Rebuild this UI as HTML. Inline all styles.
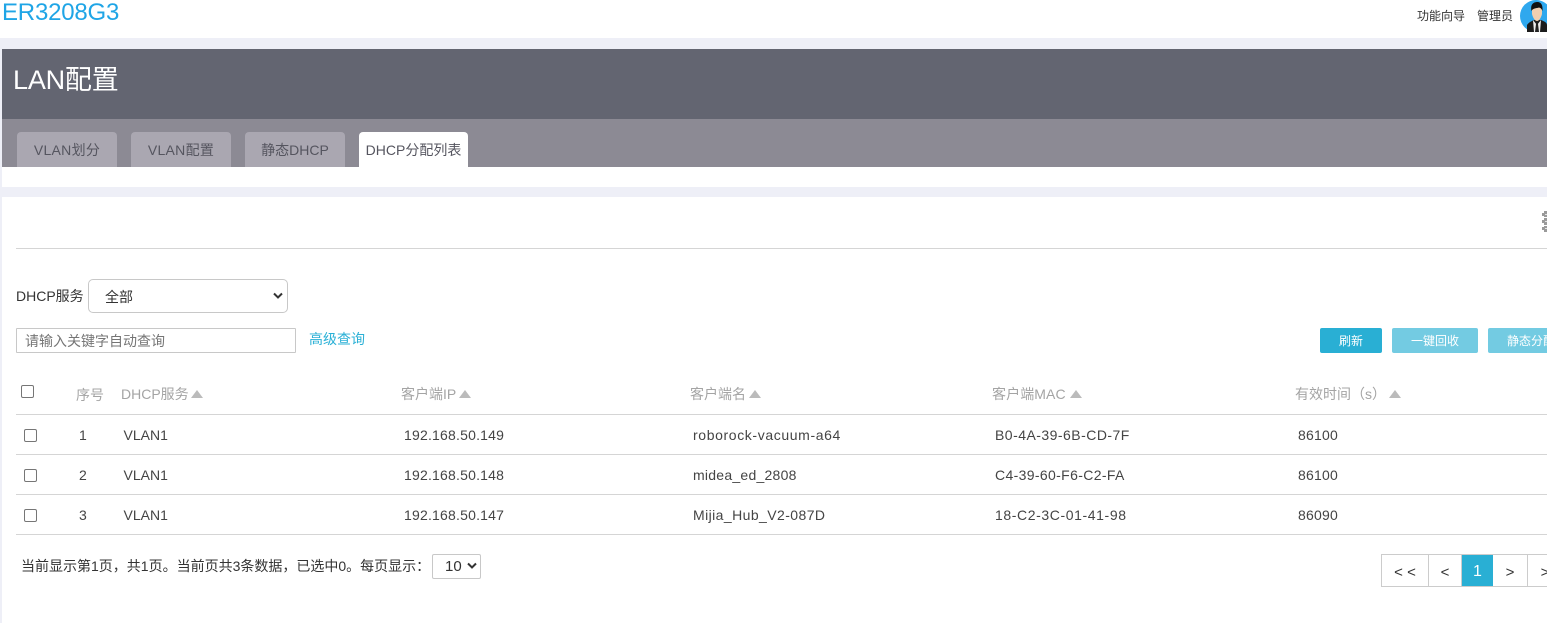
<!DOCTYPE html>
<html lang="zh"><head><meta charset="utf-8"><title>LAN配置</title>
<style>
html,body{margin:0;padding:0}
body{width:1547px;height:623px;overflow:hidden;position:relative;background:#fff;font-family:"Liberation Sans","Noto Sans CJK SC",sans-serif;font-size:13px;color:#333}
.a{position:absolute;white-space:nowrap}
.tab{position:absolute;top:132px;height:35px;background:#aaa7b1;border-radius:4px 4px 0 0;color:#55555f;font-size:14px;line-height:36px;text-align:center}
.th{position:absolute;top:385px;color:#a4a4a4;font-size:14px;line-height:18px;white-space:nowrap}
.tri{position:absolute;width:0;height:0;border-left:6px solid transparent;border-right:6px solid transparent;border-bottom:8px solid #bbb}
.td{position:absolute;font-size:14px;line-height:20px;white-space:nowrap;color:#444}
.hr{position:absolute;left:16px;width:1531px;height:1px;background:#d5d5d5}
.cb{position:absolute;width:11px;height:11px;border:1px solid #767676;border-radius:2px;background:#fff}
.btn{position:absolute;top:328px;height:25px;border-radius:2px;color:#fff;font-size:12px;line-height:26px;text-align:center;white-space:nowrap;overflow:hidden}
.pg{position:absolute;top:554px;height:31px;border:1px solid #ccc;border-left:0;color:#333;font-size:15px;line-height:35px;text-align:center;background:#fff;box-sizing:content-box;white-space:nowrap}
.sel{position:absolute;background:#fff;border:1px solid #c8c8c8;box-sizing:border-box}
</style></head><body>

<div class="a" style="left:2px;top:-3px;font-size:24px;letter-spacing:-0.2px;line-height:32px;color:#1fa5e6">ER3208G3</div>
<div class="a" style="left:1417px;top:8px;font-size:12px;line-height:16px;color:#333">功能向导</div>
<div class="a" style="left:1477px;top:8px;font-size:12px;line-height:16px;color:#333">管理员</div>
<svg class="a" style="left:1520px;top:0" width="27" height="32" viewBox="0 0 27 32">
<circle cx="16" cy="16" r="16" fill="#2fa8ee"/>
<path d="M7 32L7 25C9 22 12 21 14 20L21 20C23 21 27 22 27 25L27 32Z" fill="#1c1c1c"/>
<path d="M13 20L17 25L21 20L20 32L14 32Z" fill="#eee"/>
<path d="M16 24L18 24L19 32L15 32Z" fill="#222"/>
<path d="M12 9C12 6 14 5 17 5C20 5 22 6 22 9L22 14C21 18 19 21 17 21C15 21 13 18 12 14Z" fill="#f1cfb0"/>
<path d="M11.5 11C10 4 14 2 17.500 2C21 2 23 5 22.500 11C21.500 9 21 8 19 7.500C16 8.500 13 8 11.500 11Z" fill="#111"/>
</svg>

<div class="a" style="left:0;top:38px;width:1547px;height:11px;background:#eeeff7"></div>
<div class="a" style="left:0;top:49px;width:2px;height:138px;background:#eeeff7"></div>
<div class="a" style="left:2px;top:49px;width:1545px;height:70px;background:#636571"></div>
<div class="a" style="left:13px;top:62px;font-size:27px;letter-spacing:-0.2px;line-height:36px;color:#fff">LAN配置</div>
<div class="a" style="left:2px;top:119px;width:1545px;height:48px;background:#8c8a94"></div>

<div class="tab" style="left:17px;width:100px;letter-spacing:.3px">VLAN划分</div>
<div class="tab" style="left:131px;width:100px;letter-spacing:.3px">VLAN配置</div>
<div class="tab" style="left:245px;width:100px">静态DHCP</div>
<div class="tab" style="left:359px;width:109px;background:#fff">DHCP分配列表</div>

<div class="a" style="left:0;top:187px;width:1547px;height:10px;background:#eeeff7"></div>
<div class="a" style="left:0;top:197px;width:2px;height:426px;background:#eeeff7"></div>

<svg class="a" style="left:1542px;top:211px" width="5" height="21" viewBox="0 0 5 21">
<g fill="#9a9a9a">
<rect x="2" y="0" width="3" height="6"/><rect x="0" y="2" width="5" height="3"/>
<rect x="2" y="7" width="3" height="7"/><rect x="0" y="9" width="5" height="3"/>
<rect x="2" y="15" width="3" height="6"/><rect x="0" y="16" width="5" height="3"/>
</g>
<g fill="#e4e4e4"><rect x="3" y="3" width="2" height="1"/><rect x="3" y="10" width="2" height="1"/><rect x="3" y="17" width="2" height="1"/></g>
</svg>
<div class="hr" style="top:248px"></div>

<div class="a" style="left:16px;top:287px;font-size:14px;line-height:18px;color:#333">DHCP服务</div>
<div class="sel" style="left:88px;top:279px;width:200px;height:34px;border-radius:5px"></div>
<div class="a" style="left:105px;top:288px;font-size:14px;line-height:18px;color:#333">全部</div>
<svg class="a" style="left:273px;top:292px" width="10" height="8" viewBox="0 0 10 8"><path d="M1 1.500L5 5.500L9 1.500" fill="none" stroke="#333" stroke-width="2"/></svg>

<div class="sel" style="left:16px;top:328px;width:280px;height:25px;border-radius:1px"></div>
<div class="a" style="left:25px;top:332px;font-size:14px;line-height:18px;color:#757575">请输入关键字自动查询</div>
<div class="a" style="left:309px;top:330px;font-size:14px;line-height:18px;color:#29b0d6">高级查询</div>

<div class="btn" style="left:1320px;width:62px;background:#29afd4">刷新</div>
<div class="btn" style="left:1392px;width:86px;background:#73cbe2">一键回收</div>
<div class="btn" style="left:1488px;width:86px;background:#73cbe2">静态分配</div>

<div class="cb" style="left:21px;top:385px"></div>
<div class="th" style="left:76px;top:386px">序号</div>
<div class="th" style="left:121px">DHCP服务</div><div class="tri" style="left:191px;top:390px"></div>
<div class="th" style="left:401px">客户端IP</div><div class="tri" style="left:459px;top:390px"></div>
<div class="th" style="left:690px">客户端名</div><div class="tri" style="left:749px;top:390px"></div>
<div class="th" style="left:992px;letter-spacing:.1px">客户端MAC</div><div class="tri" style="left:1070px;top:390px"></div>
<div class="th" style="left:1295px">有效时间（s）</div><div class="tri" style="left:1389px;top:390px"></div>
<div class="hr" style="top:414px"></div>

<div class="cb" style="left:24px;top:429px"></div>
<div class="td" style="left:79px;top:425px">1</div>
<div class="td" style="left:123.500px;top:425px">VLAN1</div>
<div class="td" style="left:404px;top:425px;letter-spacing:.2px">192.168.50.149</div>
<div class="td" style="left:693px;top:425px;letter-spacing:.62px">roborock-vacuum-a64</div>
<div class="td" style="left:995px;top:425px;letter-spacing:.47px">B0-4A-39-6B-CD-7F</div>
<div class="td" style="left:1298px;top:425px;letter-spacing:.2px">86100</div>
<div class="hr" style="top:454px"></div>

<div class="cb" style="left:24px;top:469px"></div>
<div class="td" style="left:79px;top:465px">2</div>
<div class="td" style="left:123.500px;top:465px">VLAN1</div>
<div class="td" style="left:404px;top:465px;letter-spacing:.2px">192.168.50.148</div>
<div class="td" style="left:693px;top:465px;letter-spacing:.25px">midea_ed_2808</div>
<div class="td" style="left:995px;top:465px;letter-spacing:.35px">C4-39-60-F6-C2-FA</div>
<div class="td" style="left:1298px;top:465px;letter-spacing:.2px">86100</div>
<div class="hr" style="top:494px"></div>

<div class="cb" style="left:24px;top:509px"></div>
<div class="td" style="left:79px;top:505px">3</div>
<div class="td" style="left:123.500px;top:505px">VLAN1</div>
<div class="td" style="left:404px;top:505px;letter-spacing:.2px">192.168.50.147</div>
<div class="td" style="left:693px;top:505px;letter-spacing:.42px">Mijia_Hub_V2-087D</div>
<div class="td" style="left:995px;top:505px;letter-spacing:.6px">18-C2-3C-01-41-98</div>
<div class="td" style="left:1298px;top:505px;letter-spacing:.2px">86090</div>
<div class="hr" style="top:534px"></div>

<div class="a" style="left:21px;top:557px;font-size:14px;line-height:18px;color:#333">当前显示第1页，共1页。当前页共3条数据，已选中0。每页显示：</div>
<div class="sel" style="left:432px;top:554px;width:49px;height:25px;border-radius:2px"></div>
<div class="a" style="left:445px;top:558px;font-size:15px;line-height:18px;color:#333">10</div>
<svg class="a" style="left:467px;top:562px" width="10" height="8" viewBox="0 0 10 8"><path d="M1 1.500L5 5.500L9 1.500" fill="none" stroke="#333" stroke-width="2"/></svg>

<div class="pg" style="left:1381px;width:46px;border-left:1px solid #ccc">&lt; &lt;</div>
<div class="pg" style="left:1429px;width:32px">&lt;</div>
<div class="pg" style="left:1462px;width:31px;background:#29afd4;color:#fff;font-size:16px;line-height:33px;border-right:0">1</div>
<div class="pg" style="left:1493px;width:34px">&gt;</div>
<div class="pg" style="left:1528px;width:47px">&gt; &gt;</div>

</body></html>
